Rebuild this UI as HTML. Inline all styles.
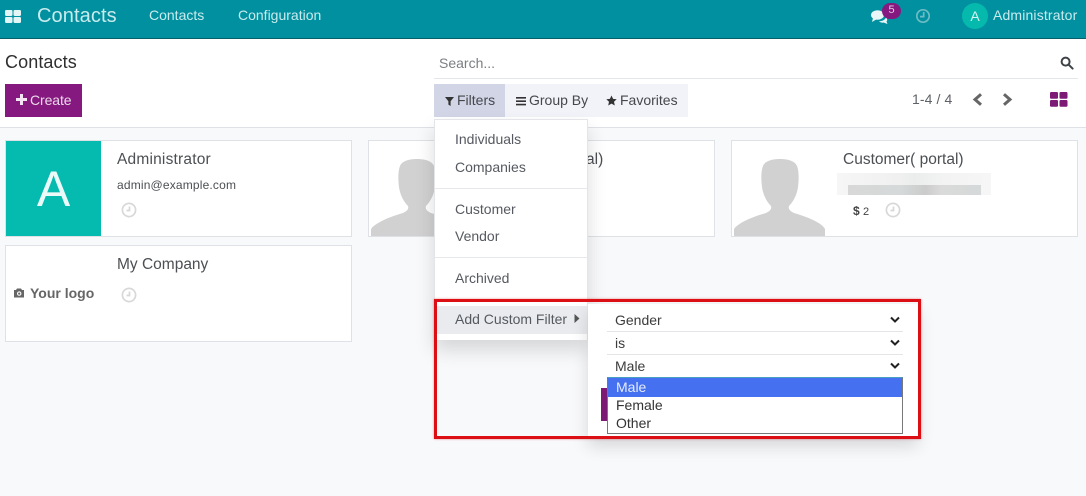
<!DOCTYPE html>
<html><head><meta charset="utf-8">
<style>
*{box-sizing:border-box}
html,body{margin:0;padding:0}
body{width:1086px;height:496px;overflow:hidden;position:relative;background:#f8f9fb;font-family:"Liberation Sans",sans-serif;font-size:14px;color:#4c4c4c}
.a{position:absolute;white-space:nowrap}
.t{line-height:18px}
.card{position:absolute;background:#fff;border:1px solid #dee2e6}
.mi{position:absolute;left:455px;line-height:18px;color:#565a60;font-size:14px;white-space:nowrap}
.hr{position:absolute;left:435px;width:152px;height:1px;background:#e6e8eb}
.nm{line-height:20px;font-size:15.5px;color:#4c4f53}
</style></head><body>
<!-- navbar -->
<div class="a" style="left:0;top:0;width:1086px;height:39px;background:#01909f;border-bottom:1px solid #05606c"></div>
<svg class="a" style="left:5px;top:10px" width="16" height="13" viewBox="0 0 16 13"><rect width="7.5" height="6" x="0" y="0" rx="1.2" fill="#e4f5f6"/><rect width="7.5" height="6" x="8.5" y="0" rx="1.2" fill="#e4f5f6"/><rect width="7.5" height="6" x="0" y="7" rx="1.2" fill="#e4f5f6"/><rect width="7.5" height="6" x="8.5" y="7" rx="1.2" fill="#e4f5f6"/></svg>
<div class="a" style="left:37px;top:3px;line-height:26px;font-size:20px;letter-spacing:.1px;color:#c8ebee">Contacts</div>
<div class="a t" style="left:149px;top:6px;color:#c8ebee">Contacts</div>
<div class="a t" style="left:238px;top:6px;color:#c8ebee">Configuration</div>
<svg class="a" style="left:870px;top:9px" width="19" height="16" viewBox="0 0 19 16"><ellipse cx="7.5" cy="6" rx="6.5" ry="4.8" fill="#e8f6f7"/><path d="M3 9 L2 13 L7 10Z" fill="#e8f6f7"/><path d="M9 12.3 C12 12.3 15 11 16 8.5 C17.5 10 17.5 11.5 16.5 12.5 L17.5 15 L13.5 13.5 C12 14 10 13.5 9 12.3Z" fill="#e8f6f7"/></svg>
<div class="a" style="left:882px;top:3px;width:19px;height:16px;border-radius:8px;background:#86197f;color:#e3c9e0;font-size:11px;line-height:15px;text-align:center">5</div>
<svg class="a" style="left:915px;top:8px" width="16" height="16" viewBox="0 0 16 16" fill="none" stroke="#6dbcc5" stroke-width="1.7"><circle cx="8" cy="8" r="6.2"/><path d="M8.7 4v4.6H5"/></svg>
<div class="a" style="left:962px;top:3px;width:26px;height:26px;border-radius:50%;background:#05b9ad;color:#d5f3f1;font-size:14px;line-height:27px;text-align:center">A</div>
<div class="a t" style="left:993px;top:6px;color:#c8ebee;letter-spacing:.15px">Administrator</div>

<!-- control panel -->
<div class="a" style="left:0;top:39px;width:1086px;height:89px;background:#fff;border-bottom:1px solid #dee2e6"></div>
<div class="a" style="left:5px;top:50px;line-height:24px;font-size:18px;letter-spacing:.1px;color:#2f2f2f">Contacts</div>
<div class="a" style="left:5px;top:84px;width:77px;height:33px;background:#86197f"></div>
<svg class="a" style="left:16px;top:94px" width="11" height="11" viewBox="0 0 11 11"><path d="M4 0h3v4h4v3H7v4H4V7H0V4h4z" fill="#f3e6f2"/></svg>
<div class="a t" style="left:30px;top:91px;color:#ecd9ea;letter-spacing:-.1px">Create</div>
<div class="a t" style="left:439px;top:54px;color:#7b7f83">Search...</div>
<div class="a" style="left:434px;top:78px;width:644px;height:1px;background:#e4e6e9"></div>
<svg class="a" style="left:1060px;top:56px" width="14" height="14" viewBox="0 0 14 14" fill="none" stroke="#3d4347" stroke-width="2"><circle cx="5.6" cy="5.6" r="4"/><path d="M8.8 8.8l3.8 3.8" stroke-linecap="round"/></svg>
<div class="a" style="left:434px;top:84px;width:254px;height:33px;background:#f2f3f9"></div>
<div class="a" style="left:434px;top:84px;width:71px;height:33px;background:#d2d5e6"></div>
<svg class="a" style="left:445px;top:97px" width="9" height="9" viewBox="0 0 9 9"><path d="M0 0h9L5.6 4.2V9L3.4 7.6V4.2z" fill="#333"/></svg>
<div class="a t" style="left:457px;top:91px;color:#44484c">Filters</div>
<svg class="a" style="left:516px;top:97px" width="10" height="9" viewBox="0 0 10 9"><path d="M0 0h10v1.6H0zM0 3.4h10V5H0zM0 6.8h10v1.6H0z" fill="#333"/></svg>
<div class="a t" style="left:529px;top:91px;color:#44484c">Group By</div>
<svg class="a" style="left:606px;top:95px" width="11" height="11" viewBox="0 0 11 11"><path d="M5.5.5l1.6 3.4 3.6.4-2.7 2.5.8 3.7-3.3-1.9-3.3 1.9.8-3.7L.3 4.3l3.6-.4z" fill="#333"/></svg>
<div class="a t" style="left:620px;top:91px;color:#44484c">Favorites</div>
<div class="a t" style="left:912px;top:90px;color:#5f6368;letter-spacing:.1px">1-4 / 4</div>
<svg class="a" style="left:972px;top:93px" width="11" height="13" viewBox="0 0 11 13" fill="none" stroke="#666" stroke-width="3"><path d="M9 1.2L3 6.5l6 5.3"/></svg>
<svg class="a" style="left:1002px;top:93px" width="11" height="13" viewBox="0 0 11 13" fill="none" stroke="#666" stroke-width="3"><path d="M2 1.2L8 6.5l-6 5.3"/></svg>
<svg class="a" style="left:1050px;top:92px" width="18" height="15" viewBox="0 0 18 15"><rect width="8" height="6.8" rx="1.2" fill="#7c1a76"/><rect x="9.5" width="8" height="6.8" rx="1.2" fill="#7c1a76"/><rect y="8" width="8" height="6.8" rx="1.2" fill="#7c1a76"/><rect x="9.5" y="8" width="8" height="6.8" rx="1.2" fill="#7c1a76"/></svg>

<!-- cards -->
<div class="card" style="left:5px;top:140px;width:347px;height:97px"></div>
<div class="a" style="left:6px;top:141px;width:95px;height:95px;background:#05bbb0;color:#eafaf8;font-size:50px;line-height:97px;text-align:center">A</div>
<div class="a nm" style="left:117px;top:150px;letter-spacing:.2px">Administrator</div>
<div class="a" style="left:117px;top:177px;line-height:16px;font-size:12px;letter-spacing:.17px;color:#4c4f53">admin@example.com</div>
<svg class="a" style="left:121px;top:202px" width="16" height="16" viewBox="0 0 16 16" fill="none" stroke="#d8d8d8" stroke-width="1.7"><circle cx="8" cy="8" r="6.6"/><path d="M8.5 4.5v4H5.5"/></svg>

<div class="card" style="left:5px;top:245px;width:347px;height:97px"></div>
<svg class="a" style="left:13px;top:287px" width="12" height="12" viewBox="0 0 12 12"><path d="M1 3h2l1-1.5h4L9 3h2v7.5H1z" fill="#666"/><circle cx="6.2" cy="6.6" r="2.2" fill="#fff"/><circle cx="6.2" cy="6.6" r="1.1" fill="#666"/></svg>
<div class="a" style="left:30px;top:285px;line-height:17px;font-size:14px;font-weight:bold;color:#666">Your logo</div>
<div class="a nm" style="left:117px;top:255px">My Company</div>
<svg class="a" style="left:121px;top:287px" width="16" height="16" viewBox="0 0 16 16" fill="none" stroke="#d8d8d8" stroke-width="1.7"><circle cx="8" cy="8" r="6.6"/><path d="M8.5 4.5v4H5.5"/></svg>

<div class="card" style="left:368px;top:140px;width:347px;height:97px"></div>
<svg class="a" style="left:371px;top:159px" width="93" height="77" viewBox="0 0 93 77"><path d="M0 77V70C4 64 18 58 32 54C36 52 38 50 37 47C33 43 29 36 28 28C27 20 27 12 29 7C31 2 38 0 46 0C54 0 61 2 63 7C65 12 65 20 64 28C63 36 59 43 55 47C54 50 56 52 60 54C74 58 88 64 91 70V77Z" fill="#d1d1d1"/></svg>
<div class="a nm" style="left:586px;top:150px">al)</div>

<div class="card" style="left:731px;top:140px;width:347px;height:97px"></div>
<svg class="a" style="left:734px;top:159px" width="93" height="77" viewBox="0 0 93 77"><path d="M0 77V70C4 64 18 58 32 54C36 52 38 50 37 47C33 43 29 36 28 28C27 20 27 12 29 7C31 2 38 0 46 0C54 0 61 2 63 7C65 12 65 20 64 28C63 36 59 43 55 47C54 50 56 52 60 54C74 58 88 64 91 70V77Z" fill="#d1d1d1"/></svg>
<div class="a nm" style="left:843px;top:150px">Customer( portal)</div>
<div class="a" style="left:837px;top:173px;width:154px;height:22px;background:linear-gradient(90deg,#f6f6f6,#f0f0f0 40%,#ebeded 50%,#f3f3f3 70%,#f6f6f6)"></div>
<div class="a" style="left:848px;top:185px;width:133px;height:10px;background:linear-gradient(90deg,#d8d8d8,#d5d9d9 40%,#cbcbcb 58%,#dadada 70%,#d6d9d9 95%)"></div>
<div class="a" style="left:853px;top:203px;line-height:16px;font-size:12px;color:#444"><b>$</b> <span style="font-size:11px">2</span></div>
<svg class="a" style="left:885px;top:202px" width="16" height="16" viewBox="0 0 16 16" fill="none" stroke="#d8d8d8" stroke-width="1.7"><circle cx="8" cy="8" r="6.6"/><path d="M8.5 4.5v4H5.5"/></svg>

<!-- dropdown -->
<div class="a" style="left:434px;top:119px;width:154px;height:221px;background:#fff;border:1px solid #e3e5e8;border-bottom:0;box-shadow:0 10px 18px rgba(0,0,0,.14)"></div>
<div class="mi" style="top:130px">Individuals</div>
<div class="mi" style="top:158px">Companies</div>
<div class="hr" style="top:188px"></div>
<div class="mi" style="top:200px">Customer</div>
<div class="mi" style="top:227px">Vendor</div>
<div class="hr" style="top:257px"></div>
<div class="mi" style="top:269px">Archived</div>
<div class="a" style="left:435px;top:306px;width:152px;height:28px;background:#e9ebee"></div>
<div class="mi" style="top:310px">Add Custom Filter</div>
<svg class="a" style="left:574px;top:314px" width="6" height="9" viewBox="0 0 6 9"><path d="M0.5 0L5.5 4.5L0.5 9z" fill="#555"/></svg>

<!-- submenu -->
<div class="a" style="left:588px;top:304px;width:330px;height:134px;background:#fff;box-shadow:0 8px 16px rgba(0,0,0,.14)"></div>
<div class="a t" style="left:615px;top:311px;color:#3c3c3c">Gender</div>
<div class="a" style="left:607px;top:331px;width:296px;height:1px;background:#e3e5e8"></div>
<div class="a t" style="left:615px;top:334px;color:#3c3c3c">is</div>
<div class="a" style="left:607px;top:354px;width:296px;height:1px;background:#e3e5e8"></div>
<div class="a t" style="left:615px;top:357px;color:#3c3c3c">Male</div>
<svg class="a" style="left:890px;top:316px" width="10" height="8" viewBox="0 0 10 8" fill="none" stroke="#222" stroke-width="2"><path d="M1 1.5l4 4 4-4"/></svg>
<svg class="a" style="left:890px;top:339px" width="10" height="8" viewBox="0 0 10 8" fill="none" stroke="#222" stroke-width="2"><path d="M1 1.5l4 4 4-4"/></svg>
<svg class="a" style="left:890px;top:362px" width="10" height="8" viewBox="0 0 10 8" fill="none" stroke="#222" stroke-width="2"><path d="M1 1.5l4 4 4-4"/></svg>
<div class="a" style="left:601px;top:388px;width:8px;height:33px;background:#7c1a76"></div>
<div class="a" style="left:607px;top:377px;width:296px;height:57px;background:#fff;border:1px solid #77787a;border-top-color:#4a9ec4"></div>
<div class="a" style="left:608px;top:378px;width:294px;height:19px;background:#4570f0"></div>
<div class="a t" style="left:616px;top:378px;color:#e6ecfd">Male</div>
<div class="a t" style="left:616px;top:396px;color:#333">Female</div>
<div class="a t" style="left:616px;top:414px;color:#333">Other</div>

<!-- red annotation -->
<div class="a" style="left:434px;top:299px;width:487px;height:140px;border:3px solid #dc0f14;box-shadow:0 0 2px rgba(220,15,20,.5)"></div>
</body></html>
